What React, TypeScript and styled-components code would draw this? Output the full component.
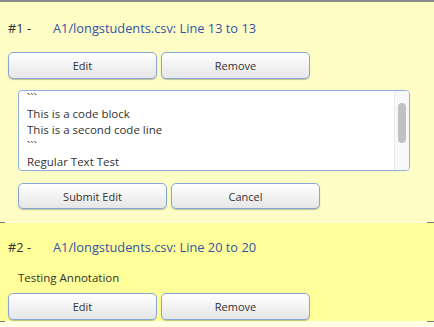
import React from "react"
import styled, { createGlobalStyle } from "styled-components"

const GlobalStyle = createGlobalStyle`
	body {
		margin: 0;
		background: #ffffff;
		font-family: "Open Sans", "Liberation Sans", sans-serif;
		color: #333333;
	}
`

interface Annotation {
	id: number
	file: string
	from: number
	to: number
	text: string
	editing: boolean
	tone: "light" | "bright"
}

const annotations: Annotation[] = [
	{
		id: 1,
		file: "A1/longstudents.csv",
		from: 13,
		to: 13,
		text: "```\n```\nThis is a code block\nThis is a second code line\n```\nRegular Text Test\n**bold** text\n\nmore text\nend",
		editing: true,
		tone: "light",
	},
	{
		id: 2,
		file: "A1/longstudents.csv",
		from: 20,
		to: 20,
		text: "Testing Annotation",
		editing: false,
		tone: "bright",
	},
]

const AnnotationCard = (props: { annotation: Annotation }) => {
	const a = props.annotation
	const areaRef = React.useRef<HTMLTextAreaElement>(null)

	React.useEffect(() => {
		if (areaRef.current) areaRef.current.scrollTop = 19
	}, [])

	return (
		<Card $tone={a.tone}>
			<Header>
				<Number>#{a.id} -</Number>
				<FileLink href="#">
					{a.file}: Line {a.from} to {a.to}
				</FileLink>
			</Header>
			{!a.editing && <Body>{a.text}</Body>}
			<ButtonRow>
				<Button>Edit</Button>
				<Button>Remove</Button>
			</ButtonRow>
			{a.editing && (
				<EditArea>
					<TextWrap>
						<TextBox ref={areaRef} defaultValue={a.text} />
						<ScrollTrack>
							<ScrollThumb />
						</ScrollTrack>
					</TextWrap>
					<ButtonRow>
						<Button>Submit Edit</Button>
						<Button>Cancel</Button>
					</ButtonRow>
				</EditArea>
			)}
		</Card>
	)
}

const App = () => {
	return (
		<Page>
			<GlobalStyle />
			{annotations.map((a) => (
				<React.Fragment key={a.id}>
					<AnnotationCard annotation={a} />
					<Divider />
				</React.Fragment>
			))}
		</Page>
	)
}

export default App

const Page = styled.div`
	border-top: 2px solid #8c8c8c;
	background: #fffde2;
	min-height: 325px;
`

const Card = styled.div<{ $tone: "light" | "bright" }>`
	background: ${(p) => (p.$tone === "light" ? "#fffdc6" : "#ffff99")};
	padding: ${(p) => (p.$tone === "light" ? "17px 0 13px 8px" : "15px 0 1px 8px")};
`

const Header = styled.div`
	display: flex;
	align-items: center;
	height: 18px;
	font-size: 12.8px;
	margin-bottom: 15px;
`

const Number = styled.span`
	width: 45px;
	color: #333333;
`

const FileLink = styled.a`
	color: #3553a8;
	text-decoration: none;
`

const Body = styled.div`
	font-size: 11.5px;
	margin: -2px 0 6px 10px;
	line-height: 18px;
`

const ButtonRow = styled.div`
	display: flex;
	gap: 4px;
`

const Button = styled.button`
	width: 149px;
	height: 27px;
	border: 1px solid #86a7d6;
	border-radius: 5px;
	background: linear-gradient(to bottom, #ffffff, #e6e6e6);
	box-shadow: 0 1px 1px rgba(0, 0, 0, 0.25);
	font-family: "Open Sans", "Liberation Sans", sans-serif;
	font-size: 11px;
	color: #333333;
	padding: 0;
`

const EditArea = styled.div`
	margin: 11px 0 0 10px;
	display: flex;
	flex-direction: column;
	gap: 12px;

	${Button} {
		height: 26px;
	}
`

const TextWrap = styled.div`
	position: relative;
	width: 392px;
	height: 81px;
`

const TextBox = styled.textarea`
	display: block;
	box-sizing: border-box;
	width: 100%;
	height: 100%;
	border: 1px solid #8fb1e0;
	border-radius: 4px;
	padding: 2px 22px 2px 8px;
	font-family: "Open Sans", "Liberation Sans", sans-serif;
	font-size: 11.5px;
	line-height: 16px;
	color: #333333;
	resize: none;
	overflow: hidden;
	outline: none;
`

const ScrollTrack = styled.div`
	position: absolute;
	top: 1px;
	right: 1px;
	bottom: 1px;
	width: 14px;
	background: #f8f8f8;
	border-left: 1px solid #ebebeb;
	border-radius: 0 3px 3px 0;
`

const ScrollThumb = styled.div`
	margin: 12px 0 0 3px;
	width: 8px;
	height: 40px;
	border-radius: 4px;
	background: #c1c1c1;
`

const Divider = styled.div`
	height: 1px;
	background: linear-gradient(
		to right,
		#7a7a7a 0 5px,
		transparent 5px calc(100% - 7px),
		#7a7a7a calc(100% - 7px)
	);
`
